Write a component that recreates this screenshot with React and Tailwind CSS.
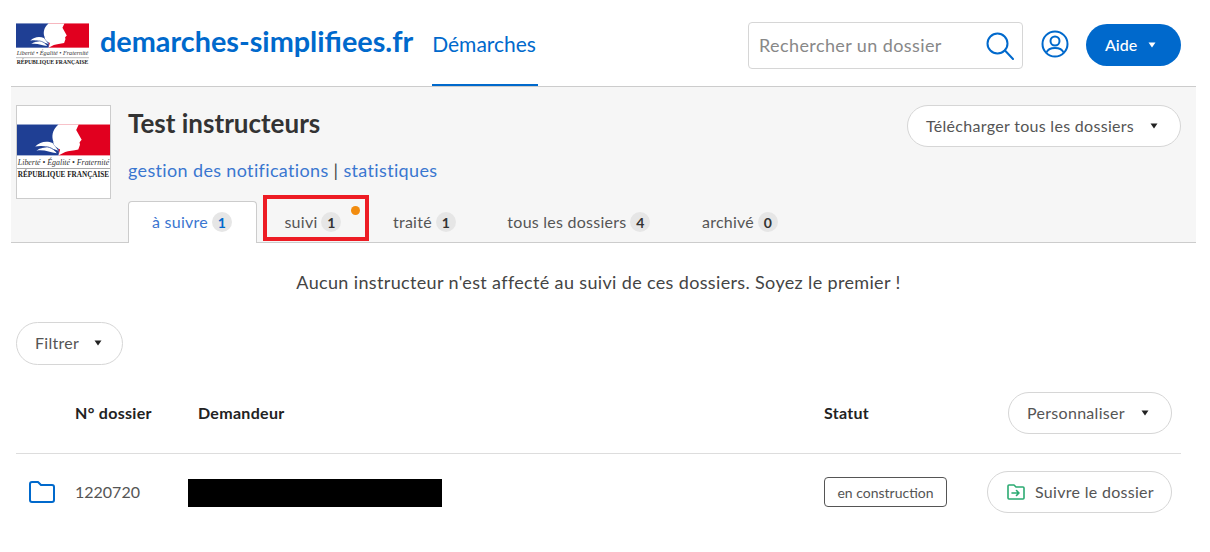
const Marianne = ({ className }) => (
  <svg viewBox="0 0 220 130" className={className}>
    <rect x="0" y="0" width="99" height="73" fill="#1f3f94" />
    <rect x="99" y="0" width="121" height="73" fill="#e1001f" />
    <path d="M98 0 H146 L140 13 L153 36 L148 42 L149 48 L145 59 C134 62 122 62 114 65 L98 73 L102 59 C92 54 85 48 86 40 C82 30 82 14 98 0 Z" fill="#fff" />
    <path d="M43 52 C54 40 72 38 84 44 L98 62 L86 58 L94 68 C78 66 62 58 46 62 C54 56 62 54 70 54 C62 50 52 50 43 52 Z" fill="#fff" />
    <path d="M56 56 C66 50 78 52 90 62" fill="none" stroke="#1f3f94" strokeWidth="2" />
    <text x="110" y="95" textAnchor="middle" textLength="216" lengthAdjust="spacingAndGlyphs" fontFamily="Liberation Serif" fontStyle="italic" fontSize="17" fill="#333">Liberté • Égalité • Fraternité</text>
    <rect x="0" y="103" width="220" height="1.5" fill="#777" />
    <text x="110" y="123" textAnchor="middle" textLength="216" lengthAdjust="spacingAndGlyphs" fontFamily="Liberation Serif" fontWeight="700" fontSize="17" fill="#222">RÉPUBLIQUE FRANÇAISE</text>
  </svg>
);

const Caret = ({ className }) => (
  <svg viewBox="0 0 8 6" className={className} fill="currentColor">
    <path d="M0.5 0.5 H7.5 L4 5.5 Z" />
  </svg>
);

const PillButton = ({ children, className }) => (
  <button className={`flex items-center rounded-full border border-[#d6d6d6] bg-white pb-[1px] text-[16px] tracking-[0.3px] text-[#555] ${className}`}>
    {children}
  </button>
);

const tabs = [
  { name: "à suivre", count: 1, active: true },
  { name: "suivi", count: 1, marked: true },
  { name: "traité", count: 1 },
  { name: "tous les dossiers", count: 4 },
  { name: "archivé", count: 0 },
];

export default function App() {
  return (
    <div className="h-[552px] w-[1210px] overflow-hidden bg-white font-['Lato',sans-serif] text-[#444]">
      <header className="flex h-[87px] w-[1185px] ml-[11px] items-start border-b border-[#ccc] pl-[5px]">
        <Marianne className="mt-[23px] h-[44px] w-[73px]" />
        <a className="ml-[11px] mt-[20px] text-[28.8px] leading-[42px] font-bold text-[#0069cc]">demarches-simplifiees.fr</a>
        <div className="ml-[19px] flex h-[86px] w-[106px] items-center border-b-2 border-[#0069cc] pt-[4px] text-[21px] text-[#0069cc]">
          Démarches
        </div>
        <div className="ml-auto mt-[22px] flex h-[47px] w-[275px] items-center justify-between rounded border border-[#d6d6d6] pl-[10px] pr-[8px] text-[18px] tracking-[0.4px] text-[#888]">
          Rechercher un dossier
          <svg viewBox="0 0 28 28" className="h-[28px] w-[28px]" fill="none" stroke="#0069cc" strokeWidth="2" strokeLinecap="round">
            <circle cx="11.5" cy="11.5" r="10" />
            <path d="M19 18.5 L27 27" />
          </svg>
        </div>
        <svg viewBox="0 0 28 28" className="ml-[18px] mt-[30px] h-[28px] w-[28px]" fill="none" stroke="#0069cc" strokeWidth="2">
          <circle cx="14" cy="14" r="12.5" />
          <circle cx="14" cy="11" r="4.5" />
          <path d="M5.5 22.5 C7 18.5 10 18 14 18 C18 18 21 18.5 22.5 22.5" />
        </svg>
        <button className="ml-[17px] mr-[15px] mt-[24px] flex h-[42px] w-[95px] items-center gap-[11px] rounded-full bg-[#0069cc] pl-[19px] text-[16px] font-medium text-white">
          Aide
          <Caret className="h-[6px] w-[8px]" />
        </button>
      </header>

      <section className="ml-[11px] h-[156px] w-[1185px] border-b border-[#ccc] bg-[#f6f6f6] pl-[5px] pt-[18px]">
        <div className="flex items-start">
          <div className="flex h-[94px] w-[95px] items-center border border-[#ccc] bg-white">
            <Marianne className="h-[56px] w-[93px]" />
          </div>
          <div className="ml-[17px] flex-1">
            <div className="flex items-start justify-between pr-[15px]">
              <h1 className="mt-[2px] text-[26px] leading-[32px] font-bold text-[#333]">Test instructeurs</h1>
              <PillButton className="h-[42px] w-[274px] justify-between pl-[18px] pr-[22px] text-[#444]">
                Télécharger tous les dossiers
                <Caret className="h-[6px] w-[8px] text-[#222]" />
              </PillButton>
            </div>
            <p className="mt-[11px] text-[18px] leading-[24px] tracking-[0.35px] text-[#3a76d0]">
              gestion des notifications <span className="text-[#444]">|</span> statistiques
            </p>
            <nav className="mt-[19px] flex h-[42px] gap-[3.5px]">
              {tabs.map((tab) => (
                <div
                  key={tab.name}
                  className={`relative flex h-[42px] items-center gap-[4px] text-[16px] tracking-[0.25px] ${tab.active ? "rounded-t border border-b-0 border-[#ccc] bg-white pb-[1px] pl-[23px] pr-[24px] text-[#3a76d0]" : "px-[24px] text-[#555]"}`}
                >
                  {tab.name}
                  <span className={`flex h-[20px] w-[20px] items-center justify-center rounded-full bg-[#e6e6e6] text-[14px] font-bold ${tab.active ? "text-[#0069cc]" : "text-[#333]"}`}>
                    {tab.count}
                  </span>
                  {tab.marked && (
                    <>
                      <span className="absolute right-[5px] top-[5px] h-[9px] w-[9px] rounded-full bg-[#f28c0f]" />
                      <span className="absolute left-[3px] top-[-6px] h-[46px] w-[106px] border-[4px] border-[#ed1c24]" />
                    </>
                  )}
                </div>
              ))}
            </nav>
          </div>
        </div>
      </section>

      <main className="ml-[16px] w-[1165px]">
        <p className="mt-[27px] text-center text-[18px] leading-[24px] tracking-[0.35px] text-[#444]">
          Aucun instructeur n'est affecté au suivi de ces dossiers. Soyez le premier !
        </p>
        <PillButton className="mt-[28px] h-[43px] w-[107px] justify-between pl-[18px] pr-[20px]">
          Filtrer
          <Caret className="h-[6px] w-[8px] text-[#222]" />
        </PillButton>

        <div className="mt-[27px] grid grid-cols-[59px_113px_636px_1fr] items-center border-b border-[#ddd] pb-[19px] text-[16px] font-bold tracking-[0.3px] text-[#222]">
          <span />
          <span>N° dossier</span>
          <span className="pl-[10px]">Demandeur</span>
          <div className="flex items-center justify-between pr-[9px]">
            <span>Statut</span>
            <PillButton className="h-[42px] w-[164px] justify-between pl-[18px] pr-[22px] font-normal">
              Personnaliser
              <Caret className="h-[6px] w-[8px] text-[#222]" />
            </PillButton>
          </div>
        </div>

        <div className="grid h-[77px] grid-cols-[59px_113px_636px_1fr] items-center pb-[1px] text-[16px] text-[#555]">
          <svg viewBox="0 0 26 22" className="ml-[13px] h-[22px] w-[26px]" fill="none" stroke="#0069cc" strokeWidth="2" strokeLinejoin="round">
            <path d="M1 3 Q1 1 3 1 H9 L12 4 H23 Q25 4 25 6 V19 Q25 21 23 21 H3 Q1 21 1 19 Z" />
          </svg>
          <span>1220720</span>
          <div className="mt-[2px] h-[28px] w-[254px] bg-black" />
          <div className="flex items-center justify-between pr-[9px]">
            <span className="flex h-[30px] w-[123px] items-center justify-center rounded border border-[#555] text-[14px]">
              en construction
            </span>
            <PillButton className="h-[42px] w-[185px] gap-[10px] pl-[19px]">
              <svg viewBox="0 0 18 16" className="h-[16px] w-[18px]" fill="none" stroke="#2bab72" strokeWidth="1.6" strokeLinejoin="round" strokeLinecap="round">
                <path d="M1 2 Q1 1 2 1 H7 L9 3 H16 Q17 3 17 4 V14 Q17 15 16 15 H2 Q1 15 1 14 Z" />
                <path d="M5 9 H12 M9.5 6.5 L12 9 L9.5 11.5" />
              </svg>
              Suivre le dossier
            </PillButton>
          </div>
        </div>
      </main>
    </div>
  );
}
